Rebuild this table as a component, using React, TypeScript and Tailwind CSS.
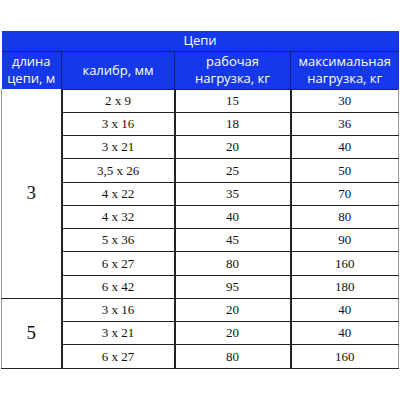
import React from 'react';

const groups = [
  {
    length: '3',
    rows: [
      ['2 x 9', '15', '30'],
      ['3 x 16', '18', '36'],
      ['3 x 21', '20', '40'],
      ['3,5 x 26', '25', '50'],
      ['4 x 22', '35', '70'],
      ['4 x 32', '40', '80'],
      ['5 x 36', '45', '90'],
      ['6 x 27', '80', '160'],
      ['6 x 42', '95', '180'],
    ],
  },
  {
    length: '5',
    rows: [
      ['3 x 16', '20', '40'],
      ['3 x 21', '20', '40'],
      ['6 x 27', '80', '160'],
    ],
  },
];

const App: React.FC = () => {
  return (
    <div className="w-[400px] h-[400px] bg-white pt-[31px] pl-[1px]">
      <table className="table-fixed border-collapse w-[397px]">
        <colgroup>
          <col className="w-[60px]" />
          <col className="w-[113px]" />
          <col className="w-[116px]" />
          <col className="w-[108px]" />
        </colgroup>
        <thead className="bg-[#1539ea] text-white font-['Open_Sans',sans-serif]">
          <tr className="h-[20px]">
            <th colSpan={4} className="font-normal text-[13px] leading-none border-b border-[#0a1f80]">
              Цепи
            </th>
          </tr>
          <tr className="h-[38px]">
            <th className="font-normal text-[13px] leading-[17px] border-r border-[#0a1f80]">длина<br />цепи, м</th>
            <th className="font-normal text-[13px] leading-[17px] border-r border-[#0a1f80]">калибр, мм</th>
            <th className="font-normal text-[13px] leading-[17px] border-r border-[#0a1f80]">рабочая<br />нагрузка, кг</th>
            <th className="font-normal text-[13px] leading-[17px]">максимальная<br />нагрузка, кг</th>
          </tr>
        </thead>
        <tbody className="font-['Liberation_Serif',serif] text-[13px] text-[#111] text-center">
          {groups.map((g, gi) =>
            g.rows.map((r, ri) => (
              <tr key={`${gi}-${ri}`} className="h-[23.25px]">
                {ri === 0 && (
                  <td
                    rowSpan={g.rows.length}
                    className="text-[19px] border-l border-l-[#999] border-b border-b-[#222] border-r-2 border-r-[#222]"
                  >
                    {g.length}
                  </td>
                )}
                <td className="border border-[#222] border-l-0">{r[0]}</td>
                <td className="border border-[#222] border-l-2">{r[1]}</td>
                <td className="border border-[#222] border-l-2 border-r-[#999]">{r[2]}</td>
              </tr>
            ))
          )}
        </tbody>
      </table>
    </div>
  );
};

export default App;
